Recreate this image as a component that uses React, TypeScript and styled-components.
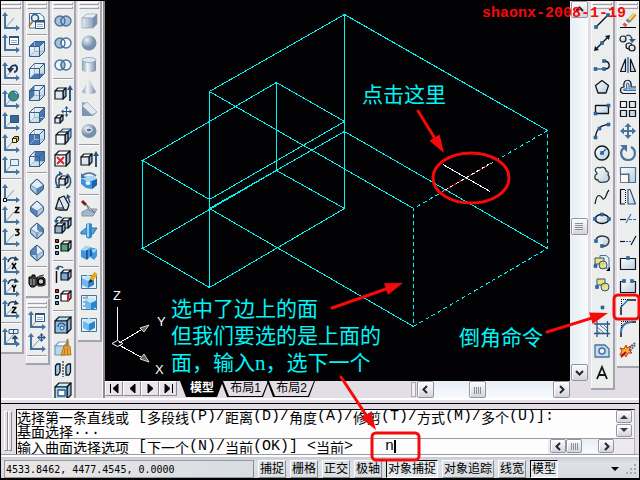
import React, { ReactNode, useState } from 'react';
import styled, { createGlobalStyle, css } from 'styled-components';

const GlobalStyle = createGlobalStyle`
  *, *::before, *::after { box-sizing: border-box; }
  body { margin: 0; background: #e3dde5; overflow: hidden; }
  button { font: inherit; color: inherit; border: 0; padding: 0; background: none; }
`;

/* ---------- layout ---------- */

const Window = styled.div`
  position: relative;
  display: flex;
  flex-direction: column;
  min-height: 100vh;
  overflow: hidden;
  background: #e3dde5;
  color: #000;
  font-family: 'Liberation Sans', 'Noto Sans CJK SC', sans-serif;
  font-size: 12px;
  &::after {
    content: '';
    position: absolute;
    inset: 0;
    border: 1px solid #000;
    border-bottom-width: 2px;
    pointer-events: none;
  }
`;

const Workspace = styled.div`
  flex: 1 0 0;
  min-height: 0;
  display: grid;
  grid-template-columns: 105px minmax(0, 1fr) 52px;
  grid-template-rows: 398px;
  overflow: hidden;
  background: linear-gradient(transparent 398px, #fff 398px, #fff 400px, transparent 400px);
`;

const Dock = styled.div<{ $side: 'left' | 'right' }>`
  display: flex;
  align-items: flex-start;
  gap: 2px;
  overflow: hidden;
  ${p => p.$side === 'left'
    ? css`border-right: 2px solid #8d8a92; box-shadow: inset -1px 0 #f6f4f8;`
    : css`padding-left: 3px;`}
`;

const DockColumn = styled.div`
  flex: none;
  width: 24px;
  display: flex;
  flex-direction: column;
  gap: 1px;
`;

const Toolbar = styled.div`
  background: #eceeed;
  border-right: 2px solid #a5a3ab;
  border-bottom: 2px solid #a5a3ab;
  box-shadow: inset 1px 1px #fbfbfd;
  padding-bottom: 4px;
`;

const Grip = styled.div`
  height: 10px;
  padding: 2px 1px 0;
  display: grid;
  grid-template-rows: 3px 3px;
  gap: 1px;
  &::before, &::after {
    content: '';
    border: 1px solid #fff;
    border-bottom-color: #a09ea8;
    border-right-color: #a09ea8;
    background: #e9e6ea;
  }
`;

const ToolButton = styled.button`
  display: block;
  width: 22px;
  height: 22px;
  svg { display: block; }
`;

const Separator = styled.hr`
  height: 6px;
  margin: 0 1px;
  border: 0;
  background: linear-gradient(transparent 2px, #9b99a3 2px, #9b99a3 3px, #fff 3px, #fff 4px, transparent 4px);
`;

const Center = styled.div`
  display: grid;
  grid-template-columns: minmax(0, 1fr) 18px;
  grid-template-rows: minmax(0, 1fr) 17px;
`;

const Canvas = styled.main`
  position: relative;
  overflow: hidden;
  background: #020104;
  svg { display: block; }
`;

const Note = styled.p<{ $x: number; $y: number }>`
  position: absolute;
  left: ${p => p.$x}px;
  top: ${p => p.$y}px;
  margin: 0;
  color: #00f6f6;
  font: 21px/27px 'Liberation Serif', 'Noto Sans CJK SC', sans-serif;
  white-space: nowrap;
`;

const VScroll = styled.div`
  display: flex;
  flex-direction: column;
  padding: 1px 0 0 1px;
  background: linear-gradient(90deg, #e6eef4, #f8fbfd);
`;

const HScroll = styled.div<{ $w?: number }>`
  display: flex;
  width: ${p => (p.$w ? `${p.$w}px` : 'auto')};
  background: linear-gradient(#e6eef4, #f8fbfd);
`;

const Splitter = styled.div`
  width: 5px;
  margin: 1px 1px 1px 0;
  border: 1px solid #a9a7b1;
  background: #f0eef2;
`;

const Space = styled.span<{ $grow: number }>`
  flex: ${p => p.$grow} 0 0;
`;

const ScrollButton = styled.button<{ $w?: number; $h?: number }>`
  flex: none;
  width: ${p => p.$w ?? 17}px;
  height: ${p => p.$h ?? 17}px;
  display: grid;
  place-items: center;
  border: 1px solid #9694a4;
  border-radius: 2px;
  background: linear-gradient(#fdfdfe, #d3d3dd);
  box-shadow: inset 1px 1px #fff;
`;

const BottomRow = styled.div`
  grid-column: 1 / -1;
  display: flex;
  align-items: stretch;
  padding-right: 18px;
  background: #e3dde5;
`;

const NavButton = styled.button`
  width: 18px;
  height: 15px;
  display: grid;
  place-items: center;
  background: #e8e4ea;
  border: 1px solid #fff;
  border-right-color: #8d8a92;
  border-bottom-color: #8d8a92;
`;

const Tabs = styled.div`
  display: flex;
  height: 16px;
  padding-left: 3px;
`;

const tabShape = 'polygon(0 0, 100% 0, calc(100% - 6px) 100%, 6px 100%)';

const Tab = styled.button<{ $active?: boolean }>`
  width: ${p => (p.$active ? 43 : 48)}px;
  height: 16px;
  margin-right: -2px;
  padding: 0 1px 1px 2px;
  background: #000;
  clip-path: ${tabShape};
  span {
    display: block;
    height: 15px;
    line-height: 15px;
    clip-path: ${tabShape};
    background: ${p => (p.$active ? '#000' : '#e3dde5')};
    color: ${p => (p.$active ? '#fff' : '#000')};
    font-weight: ${p => (p.$active ? 700 : 400)};
  }
`;

const CommandPanel = styled.section`
  height: 52px;
  padding: 5px 5px 0 4px;
  display: flex;
  gap: 3px;
  border-top: 1px solid #000;
`;

const SideGrip = styled.div`
  width: 9px;
  height: 40px;
  margin-top: 2px;
  display: grid;
  grid-template-columns: 4px 4px;
  &::before, &::after {
    content: '';
    border: 1px solid #fff;
    border-right-color: #8d8a92;
    border-bottom-color: #8d8a92;
  }
`;

const CommandBox = styled.div`
  flex: 1;
  height: 46px;
  border: 1px solid #000;
  border-right-color: #b5b3bb;
  border-bottom-color: #fff;
  background: #fdfdfd;
  font: 14px/14px 'Noto Sans CJK SC', sans-serif;
  white-space: pre;
`;

const History = styled.div`
  display: flex;
  justify-content: space-between;
  height: 29px;
  border-bottom: 1px solid #9b99a3;
`;

const HistoryLine = styled.div`
  display: flex;
  align-items: center;
  height: 14px;
`;

const HistoryScroll = styled.div`
  width: 18px;
  padding-right: 2px;
  display: flex;
  flex-direction: column;
  gap: 1px;
  background: #f2f4f8;
`;

const PromptRow = styled.div`
  display: flex;
  height: 15px;
  background: #eee9ef;
`;

const Prompt = styled.label`
  flex: 1;
  display: flex;
  align-items: center;
  background: #fdfdfd;
`;

const Latin = styled.span`
  font-family: 'Liberation Mono', monospace;
  font-size: 15px;
`;

const CommandInput = styled.input`
  width: 9px;
  height: 14px;
  margin-left: 32px;
  padding: 0;
  border: 0;
  outline: 0;
  background: transparent;
  font: 15px/14px 'Liberation Mono', monospace;
`;

const Caret = styled.i`
  width: 2px;
  height: 13px;
  background: #000;
`;

const PromptScroll = styled.div`
  width: 86px;
  padding: 0 20px 0 2px;
`;

const StatusBar = styled.footer`
  flex: none;
  height: 25px;
  padding: 4px 2px 3px 4px;
  display: flex;
  align-items: center;
  gap: 4px;
  border-top: 2px solid #fff;
  box-shadow: 0 -1px #9b99a3;
  background: linear-gradient(#c9cbd2, #dfe2e8 6px, #d4d9df);
`;

const Coordinates = styled.output`
  width: 250px;
  height: 18px;
  padding-left: 1px;
  border: 1px solid #9b99a3;
  border-right-color: #8a8a92;
  background: linear-gradient(90deg, #ebe7e4, #d7dde3);
  font: 10px/17px 'DejaVu Sans Mono', monospace;
  white-space: nowrap;
`;

const StatusButton = styled.button<{ $on?: boolean }>`
  height: 18px;
  padding: 0 1px;
  line-height: 16px;
  white-space: nowrap;
  border: 1px solid;
  border-color: ${p => (p.$on ? '#000 #fff #fff #000' : '#fff #8a8a92 #8a8a92 #fff')};
  background: ${p => (p.$on ? '#e6e9ed' : '#dcdfe4')};
`;

const StatusEnd = styled.div`
  margin-left: auto;
  display: flex;
  align-items: flex-end;
  gap: 7px;
`;

const Overlay = styled.svg`
  position: absolute;
  left: 0;
  top: 0;
  z-index: 2;
  pointer-events: none;
`;

const SharedFills = styled.svg`
  position: absolute;
  width: 0;
  height: 0;
`;

const Stamp = styled.div`
  position: absolute;
  top: 5px;
  right: 14px;
  z-index: 3;
  color: #f50a0a;
  font: bold 15px/17px 'Liberation Mono', monospace;
`;

/* ---------- icons, each on a 22 x 22 grid ---------- */

const navy = '#2a5583';
const steel = '#46729f';
const blue = '#4677b0';
const pale = '#d9e6f0';
const mid = '#8fb0cf';

const Icon = ({ children }: { children?: ReactNode }) => (
  <svg width="22" height="22" viewBox="0 0 22 22" fill="none" stroke={navy} strokeWidth="1" strokeLinejoin="round">{children}</svg>
);

const Axes = ({ children, diagonal = true }: { children?: ReactNode; diagonal?: boolean }) => (
  <Icon>
    {diagonal && <path d="M6 17L14 8" stroke="#7e9cb8" />}
    <path d="M5 5V18H17" stroke={steel} strokeWidth="2" strokeLinejoin="miter" />
    <path d="M5 2L2 6H8ZM20 18L16 15V21Z" fill={steel} stroke="none" />
    {children}
  </Icon>
);

const Turn = ({ glyph }: { glyph: string }) => (
  <Axes>
    <path d="M8 8C9 3 14 3 16 5" stroke="#1d3a5e" strokeWidth="1.500" />
    <path d="M15 2L19 6L14 7Z" fill="#1d3a5e" stroke="none" />
    <path d={glyph} stroke="#000" strokeWidth="1.500" />
  </Axes>
);

const faces: Record<string, string> = {
  top: '3.5,8.5 8.5,3.5 18.5,3.5 13.5,8.5',
  bottom: '3.5,18.5 8.5,13.5 18.5,13.5 13.5,18.5',
  left: '3.5,8.5 8.5,3.5 8.5,13.5 3.5,18.5',
  right: '13.5,8.5 18.5,3.5 18.5,13.5 13.5,18.5',
  front: '3.5,8.5 13.5,8.5 13.5,18.5 3.5,18.5',
  back: '8.5,3.5 18.5,3.5 18.5,13.5 8.5,13.5',
};

const ViewCube = ({ face }: { face: string }) => (
  <Icon>
    <path d="M3.500 8.500L8.500 3.500H18.500V13.500L13.500 18.500H3.500Z" fill="url(#glass)" stroke="none" />
    <polygon points={faces[face]} fill={blue} stroke="none" />
    <path d="M8.500 3.500V13.500H18.500M8.500 13.500L3.500 18.500" stroke="#9db9d2" />
    <path d="M3.500 8.500L8.500 3.500H18.500V13.500L13.500 18.500H3.500ZM3.500 8.500H13.500V18.500M13.500 8.500L18.500 3.500" stroke="#355f8c" />
  </Icon>
);

const isoParts = ['11,13 17.5,9 17.5,13 11,19', '4.5,9 11,13 11,19 4.5,13', '11,3 17.5,9 17.5,13 11,10', '4.5,9 11,3 11,13 4.5,13'];

const IsoCube = ({ dark }: { dark: number }) => (
  <Icon>
    <path d="M11 3L17.500 9V13L11 19L4.500 13V9Z" fill="#b0cbe2" />
    <path d="M4.500 9L11 13L17.500 9L11 3Z" fill="#e2edf6" stroke="#7c9cba" />
    <polygon points={isoParts[dark]} fill={blue} fillOpacity=".85" stroke="none" />
    <path d="M11 13V19" stroke={steel} />
    <path d="M11 3L17.500 9V13L11 19L4.500 13V9Z" stroke="#355f8c" />
  </Icon>
);

const Box = ({ x = 3, y = 6, s = 9, d = 4, fill = '#dbe8f0', top = '#fff', line = '#10151c' }: {
  x?: number; y?: number; s?: number; d?: number; fill?: string; top?: string; line?: string;
}) => (
  <g stroke={line} strokeWidth="1.200">
    <path d={`M${x} ${y + d}L${x + d} ${y}H${x + s + d}L${x + s} ${y + d}Z`} fill={top} />
    <path d={`M${x + s} ${y + d}L${x + s + d} ${y}V${y + s}L${x + s} ${y + s + d}Z`} fill={mid} />
    <path d={`M${x} ${y + d}H${x + s}V${y + s + d}H${x}Z`} fill={fill} />
  </g>
);

const Extrude = () => (
  <Icon>
    <Box x={3} y={6} s={8} d={3} />
    <path d="M18 19V7" strokeWidth="2" />
    <path d="M18 3L15 8H21Z" fill={navy} stroke="none" />
  </Icon>
);

const Circles = ({ a, b, both }: { a: string; b: string; both: string }) => (
  <Icon>
    <g strokeWidth="1.400" stroke={steel}>
      <circle cx="8" cy="11" r="5" fill={a} />
      <circle cx="14" cy="11" r="5" fill={b} />
      <path d="M11 7A5 5 0 0 1 11 15A5 5 0 0 1 11 7Z" fill={both} />
    </g>
  </Icon>
);

const Dots = ({ pts }: { pts: number[][] }) => (
  <>{pts.map(([x, y]) => <rect key={`${x},${y}`} x={x - 1.5} y={y - 1.5} width="3" height="3" fill="#1c6cc4" stroke={navy} strokeWidth=".6" />)}</>
);

const List = () => (
  <>
    <rect x="3.500" y="3.500" width="3" height="3" fill="#d22" stroke="#000" />
    <rect x="3.500" y="9.500" width="3" height="3" fill="#3c8" stroke="#000" />
    <rect x="3.500" y="15.500" width="3" height="3" fill="#48e" stroke="#000" />
  </>
);

const Card = () => (
  <>
    <rect x="9.500" y="4.500" width="9" height="8" fill="#fff" />
    <path d="M9 5H19" strokeWidth="2" />
    <path d="M11 8.500H17M11 10.500H17" stroke={mid} />
  </>
);

const BlueCube = ({ x = 5, y = 5 }: { x?: number; y?: number }) => (
  <g transform={`translate(${x} ${y})`} stroke="none">
    <path d="M0 3L6 0L12 3L6 6Z" fill="#bfe6ff" />
    <path d="M0 3L6 6V13L0 10Z" fill="#6fb9ec" />
    <path d="M12 3L6 6V13L12 10Z" fill="#2c83cc" />
  </g>
);

type Tool = [string, ReactNode] | null;

const ucsTools: Tool[] = [
  ['UCS', <Axes />],
  ['Named UCS', <Axes diagonal={false}><Card /></Axes>],
  null,
  ['Previous UCS', <Axes><path d="M10 10C11 4 18 4 17 9C17 11 15 12 14 12" stroke="#1d3a5e" strokeWidth="2" /><path d="M7 8H14L10 13Z" fill="#1d3a5e" stroke="none" /></Axes>],
  null,
  ['World UCS', <Axes><circle cx="13.500" cy="8" r="5" fill="#3c82b8" /><path d="M10 5L14 4L13 8L10 9ZM14 9L17 7V11L14 12Z" fill="#36a046" stroke="none" /><path d="M15 4L17 6" stroke="#dff" /></Axes>],
  ['Object UCS', <Axes><rect x="10.500" y="5.500" width="8" height="7" fill="#356896" /></Axes>],
  ['Face UCS', <Axes><path d="M12.500 6.500L14.500 4.500H18.500V8.500L16.500 10.500H12.500Z" fill="#c8b44c" stroke="#222" /><path d="M12.500 6.500H16.500V10.500H12.500Z" fill="#fff6a0" stroke="#222" /></Axes>],
  ['View UCS', <Axes><rect x="10.500" y="5.500" width="8" height="6" fill="#e4eff6" stroke={steel} /></Axes>],
  null,
  ['Origin', <Axes><rect x="3.500" y="16.500" width="3" height="3" fill="#fff" stroke="#000" /></Axes>],
  ['Z axis', <Axes><path d="M15 3.500H19L15 8.500H19.500" stroke="#000" strokeWidth="1.500" /></Axes>],
  ['3 point', <Axes><path d="M15 3.500H19L17 5.500C20 6 20 10 15 9" stroke="#000" strokeWidth="1.500" /></Axes>],
  null,
  ['Rotate X', <Turn glyph="M12 9L16 15M16 9L12 15" />],
  ['Rotate Y', <Turn glyph="M12 9L14 12L16 9M14 12V16" />],
  ['Rotate Z', <Turn glyph="M12 9.500H16L12 14.500H16.500" />],
  null,
  ['Apply UCS', <Axes><path d="M9 3.500H18V7.500H9ZM13.500 3.500V7.500" fill="#e4eff6" /><path d="M15 17V11M12.500 13L15 10L17.500 13" stroke="#1d3a5e" strokeWidth="1.500" /></Axes>],
];

const viewTools: Tool[] = [
  ['Named views', <Icon><path d="M3.500 3.500H14L18 7V18H3.500Z" fill="#f2f7fa" stroke={steel} /><circle cx="9" cy="8" r="3.500" fill="#e2f0fa" strokeWidth="1.500" /><path d="M7 11L3 16" stroke="#b87420" strokeWidth="2" /><rect x="9.500" y="10.500" width="9" height="8" fill="#fff" /><path d="M9 11.500H19" strokeWidth="2" /><path d="M11 14.500H17M11 16.500H17" stroke={mid} /></Icon>],
  null,
  ...['top', 'bottom', 'left', 'right', 'front', 'back'].map(f => [f, <ViewCube face={f} />] as Tool),
  null,
  ...[0, 1, 2, 3].map(n => [`Isometric ${n + 1}`, <IsoCube dark={n} />] as Tool),
  null,
  ['Camera', <Icon><path d="M3 7H6V5H9V7L12 9V14L8 17H5L3 14Z" fill="#3a3a3a" stroke="#000" /><path d="M11 7H17L19 9V15L16 16H12Z" fill="#777" stroke="#111" /><circle cx="15" cy="11.500" r="3" fill="#c4cccc" stroke="#000" strokeWidth="1.500" /><path d="M5 9V15M8 9V15" stroke="#b4b4b4" /><path d="M13 6L18 5" stroke="#333" /></Icon>],
];

const ucsTwoTools: Tool[] = [
  ['UCS dialog', <Axes><Card /></Axes>],
  ['Move UCS', <Axes><path d="M15.500 3V10M12 6.500H19" strokeWidth="1.300" /><path d="M15.500 2L13.500 4.500H17.500ZM15.500 11L13.500 8.500H17.500ZM11 6.500L13.500 4.500V8.500ZM20 6.500L17.500 4.500V8.500Z" fill={navy} stroke="none" /></Axes>],
  null,
];

const editTools: Tool[] = [
  ['Union', <Circles a="#a9c1d6" b="#a9c1d6" both="#a9c1d6" />],
  ['Subtract', <Circles a="#a9c1d6" b="#f2f5f6" both="#fff" />],
  ['Intersect', <Circles a="#f2f5f6" b="#f2f5f6" both="#a9c1d6" />],
  null,
  ['Extrude faces', <Extrude />],
  ['Move faces', <Icon><Box x={3} y={11} s={5} d={3} /><path d="M14.500 3V12M10 7.500H19" /><path d="M14.500 2L12.500 4.500H16.500ZM14.500 13L12.500 10.500H16.500ZM9 7.500L11.500 5.500V9.500ZM20 7.500L17.500 5.500V9.500Z" fill={navy} stroke="none" /></Icon>],
  ['Offset faces', <Icon><Box x={7} y={3} s={8} d={4} fill={mid} top={pale} line={navy} /><Box x={4} y={6} s={9} d={3} fill="#f2f6f8" /></Icon>],
  ['Delete faces', <Icon><Box x={3} y={3} s={11} d={4} fill="#f6f8f8" /><path d="M5 9L12 16M12 9L5 16" stroke="#d8262c" strokeWidth="2" /></Icon>],
  ['Rotate faces', <Icon><Box x={7} y={6} s={6} d={3} /><path d="M8 4C2 6 3 14 7 18M14 18C20 16 20 8 15 4" strokeWidth="1.600" /><path d="M7 1L11 4L7 6ZM3 18H8V14Z" fill={navy} stroke="none" /></Icon>],
  ['Taper faces', <Icon><path d="M3.500 17L7 6L12 4L17 13L15 18H7Z" fill={pale} stroke="#10151c" strokeWidth="1.300" /><path d="M7 6L12 17M4 16H12" stroke="#10151c" /><path d="M18 11L16 5" strokeWidth="1.500" /><path d="M15 2L19 5L14 7Z" fill={navy} stroke="none" /></Icon>],
  ['Copy faces', <Icon><Box x={9} y={4} s={7} d={3} fill="#b8d8ee" /><Box x={3} y={9} s={7} d={3} fill={mid} /><path d="M4 7C4 3 7 2 10 4" strokeWidth="1.500" /><path d="M2 6H7L4 10Z" fill={navy} stroke="none" /></Icon>],
  ['Colour faces', <Icon><List /><Box x={9} y={5} s={7} d={3} fill="#56a86e" /></Icon>],
  null,
  ['Copy edges', <Icon><Box x={9} y={6} s={7} d={3} fill="#7aaad6" /><path d="M4.500 7V19" stroke="#10151c" strokeWidth="1.500" /><path d="M5 4C7 2 10 2 11 4" strokeWidth="1.500" /><path d="M3 5L7 1V6Z" fill={navy} stroke="none" /></Icon>],
  ['Colour edges', <Icon><List /><Box x={9} y={5} s={7} d={3} fill="#fff" /><path d="M16 8V15" stroke="#e02020" strokeWidth="2" /></Icon>],
  null,
  ['Imprint', <Icon><Box x={3} y={3} s={12} d={4} fill="#8fc0e4" top="#b8dcf4" /><path d="M6 13C6 8 12 8 13 12" stroke={navy} strokeWidth="1.300" /><circle cx="10" cy="14" r="2" fill="#cfe6f6" /></Icon>],
  ['Clean', <Icon><Box x={3} y={6} s={9} d={4} fill="#bcd4e8" line="#7e98b4" /><path d="M15.500 3V10" stroke="#b07820" strokeWidth="2" /><path d="M12 10H18L19 19H9Z" fill="#f0a830" stroke="#b07820" /><path d="M13 12L12 19M15.500 12V19" stroke="#b8701c" /></Icon>],
  ['Separate', <Icon><path d="M3.500 8L5 6H8V14L6 17H3.500Z" fill="#9ecbe8" stroke="#10151c" strokeWidth="1.300" /><path d="M14 8L16 6H18.500V14L17 17H14Z" fill="#9ecbe8" stroke="#10151c" strokeWidth="1.300" /><path d="M11 3V19" stroke="#000" strokeDasharray="2 1" /></Icon>],
  ['Shell', <Icon><Box x={3} y={3} s={12} d={4} fill="#a8daf4" top="#c8ecfc" /><rect x="6" y="10" width="7" height="6" fill="#fff" stroke={navy} strokeWidth="1.300" /></Icon>],
];

const solidTools: Tool[] = [
  ['Box', <Icon><g stroke="#8294a8" strokeWidth=".6"><path d="M4 8L9 4H19L15 8Z" fill="#e8eff5" /><path d="M15 8L19 4V14L15 18Z" fill="#7890ac" /><path d="M4 8H15V18H4Z" fill="url(#steel)" /></g></Icon>],
  ['Sphere', <Icon><circle cx="11" cy="11" r="7.500" fill="url(#ball)" stroke="none" /></Icon>],
  ['Cylinder', <Icon><path d="M4 6V16C4 19 18 19 18 16V6Z" fill="url(#tube)" stroke="none" /><ellipse cx="11" cy="6" rx="7" ry="2.500" fill="#dde7f0" stroke="#8ba0b6" strokeWidth=".8" /></Icon>],
  ['Cone', <Icon><path d="M11 3L18 16C16 19 6 19 4 16Z" fill="url(#tube)" stroke="none" /></Icon>],
  ['Wedge', <Icon><path d="M4 4L9 5L19 14L15 18H4Z" fill="#8fa4bc" stroke="none" /><path d="M9 4L19 14L14 17L4 8Z" fill="#dfe9f2" stroke="#93a5ba" strokeWidth=".7" /><path d="M4 8L14 18H4Z" fill="#7f94ae" stroke="none" /></Icon>],
  ['Torus', <Icon><ellipse cx="11" cy="11" rx="7.500" ry="7" fill="url(#ball)" stroke="none" /><ellipse cx="11" cy="10" rx="3" ry="2" fill="#5e7894" stroke="#f4f8fa" /></Icon>],
  null,
  ['Extrude', <Extrude />],
  ['Revolve', <Icon><path d="M3 9L9 6H15L19 9V15L14 19L8 18L3 14Z" fill="#3b94e2" stroke="none" /><path d="M4 8L9 6H16L19 9L14 11H8Z" fill="#a8d4f4" stroke="none" /><path d="M14 11L19 9V15L14 19Z" fill="#1c62ae" stroke="none" /><ellipse cx="10" cy="13" rx="2.500" ry="2" fill="#eef6fc" stroke="none" /><path d="M4 6C8 2 14 2 18 6" strokeWidth="1.600" stroke={steel} /><path d="M3 3V8H8Z" fill={steel} stroke="none" /></Icon>],
  null,
  ['Slice', <Icon><path d="M4 14L10 11H19L15 18H4Z" fill="#a4b8cc" stroke="#8296ac" /><path d="M4 3L8 7" stroke="#7a2418" strokeWidth="3" /><path d="M8 6L17 15L11 12Z" fill="#c8d2da" stroke="#6a7886" /></Icon>],
  ['Section', <Icon><path d="M3 12L8 8H19L15 14H3Z" fill="#4da4e4" stroke="#2c6eaa" /><path d="M8 4C10 3 13 3 14 4V17C12 19 10 19 8 17Z" fill="#3686cc" stroke="none" /><path d="M10 4V17" stroke="#9cd0f4" strokeWidth="2" /></Icon>],
  ['Interfere', <Icon><path d="M3 8L8 4L19 7V14L16 18L12 15L9 18L3 15Z" fill="#3e96dc" stroke="none" /><path d="M3 8L8 4L13 5L8 9ZM12 8L19 7L16 11Z" fill="#a6d8f6" stroke="none" /><path d="M9 8V17M13 8V14" stroke="#1d5e9c" strokeWidth="2" /></Icon>],
  null,
  ['Drawing', <Icon><rect x="3.500" y="5.500" width="15" height="13" fill="#e8f0f6" stroke={steel} /><BlueCube x={4} y={5} /><path d="M18 3L13 10" stroke="#e8a81c" strokeWidth="4" /><path d="M12 9L11 13L15 11Z" fill="#222" stroke="none" /></Icon>],
  ['View', <Icon><rect x="3.500" y="3.500" width="15" height="14" fill="#e8f0f6" stroke={steel} /><path d="M5 6H8M5 10H8M5 14H8M9 3V17" stroke={steel} /><BlueCube x={7} y={5} /></Icon>],
  ['Profile', <Icon><rect x="3.500" y="4.500" width="15" height="13" fill="#e8f0f6" stroke={steel} /><BlueCube x={5} y={4} /></Icon>],
];

const ink = '#11161c';

const drawTools: Tool[] = [
  ['Line', <Icon><path d="M5 17L17 5" stroke={ink} strokeWidth="1.400" /><Dots pts={[[5, 17], [17, 5]]} /></Icon>],
  ['Construction line', <Icon><path d="M5 17L17 5" stroke={ink} strokeWidth="1.400" /><path d="M19 3L18 8L14 4ZM3 19L4 14L8 18Z" fill={ink} stroke="none" /><Dots pts={[[11, 11]]} /></Icon>],
  ['Polyline', <Icon><path d="M13 15H15C20 14 19 7 13 7" stroke={ink} strokeWidth="1.400" /><path d="M4 15H13" stroke="#2a66a8" strokeWidth="1.400" /><Dots pts={[[4.5, 15], [13, 15], [13, 7]]} /></Icon>],
  ['Polygon', <Icon><path d="M11 4.500L17.500 9.500L15 17H7L4.500 9.500Z" fill="url(#glass)" stroke={ink} strokeWidth="1.300" /></Icon>],
  ['Rectangle', <Icon><rect x="4.500" y="7.500" width="13" height="8" fill="url(#glass)" stroke={ink} strokeWidth="1.300" /><Dots pts={[[4.5, 15.5], [17.5, 7.5]]} /></Icon>],
  ['Arc', <Icon><path d="M4.500 18C5 9 9 5 18 4.500" stroke={ink} strokeWidth="1.300" /><Dots pts={[[4.5, 17.5], [8.5, 8.5], [17.5, 4.5]]} /></Icon>],
  ['Circle', <Icon><circle cx="11" cy="11" r="7" fill="url(#glass)" stroke={ink} strokeWidth="1.400" /><path d="M11 11L15 7" stroke="#1c6cc4" strokeWidth="1.500" /><Dots pts={[[11, 11]]} /></Icon>],
  ['Revision cloud', <Icon><path d="M6 9C2 6 6 2 9 4C12 2 15 4 15 7C17 7 18 9 17 11C20 14 17 19 13 18C10 19 7 18 7 16C3 16 3 11 6 10Z" fill="url(#glass)" stroke="#343b45" strokeWidth="1.300" /></Icon>],
  ['Spline', <Icon><path d="M4 18C6 5 10 10 12 13C15 14 15 7 18 4" stroke={ink} strokeWidth="1.200" /></Icon>],
  ['Ellipse', <Icon><ellipse cx="11" cy="11" rx="7" ry="4.500" fill="url(#glass)" stroke={ink} strokeWidth="1.400" /><Dots pts={[[4, 11], [18, 11], [11, 6.5]]} /></Icon>],
  ['Ellipse arc', <Icon><path d="M5 9C9 4 18 6 18 11C18 15 14 17 11 16L12 11Z" fill="url(#glass)" stroke="none" /><path d="M5 9C9 4 18 6 18 11C18 15 14 17 11 16" stroke="#343b45" strokeWidth="1.400" /><Dots pts={[[5, 11], [11, 16]]} /></Icon>],
  ['Insert block', <Icon><path d="M9 3.500H15L18 6V16H9Z" fill="#e8eff5" stroke={steel} /><path d="M4 6H13V12H4Z" fill="#f0e36c" /><circle cx="12" cy="13" r="4" fill="#e8dc78" fillOpacity=".8" /><Dots pts={[[4.5, 14]]} /><path d="M19 15V19H15Z" fill="#000" stroke="none" /></Icon>],
  ['Make block', <Icon><path d="M6 5H14V11H6Z" fill="#f0e36c" /><circle cx="14" cy="13" r="4" fill="#e8dc78" fillOpacity=".8" /><Dots pts={[[6, 13]]} /></Icon>],
  ['Point', <Icon><Dots pts={[[11.5, 11.5]]} /></Icon>],
  ['Hatch', <Icon><rect x="6" y="6" width="11" height="10" fill="#edf3f7" stroke="none" /><path d="M6 3V19M16.500 3V19M3 6H19M3 15.500H19" strokeWidth="1.300" /><path d="M6 13L9 15M6 9L13 15M8 6L16 13M12 6L16 10" stroke={steel} /></Icon>],
  ['Region', <Icon><path d="M4 5H14L18 9V17H4Z" fill="#c6dcea" stroke={steel} strokeWidth="1.300" /><circle cx="11" cy="11" r="3" fill="#edf3f7" stroke={steel} strokeWidth="1.500" /></Icon>],
  ['Text', <Icon><path d="M6 17L11 5L16 17M7.500 13H14.500" stroke={ink} strokeWidth="1.800" strokeLinejoin="miter" /></Icon>],
];

const modifyTools: Tool[] = [
  ['Erase', <Icon><path d="M3 17.500H19" stroke="#000" /><path d="M18 4L12 11" stroke="#c79524" strokeWidth="4" /><path d="M18 3L12 10" stroke="#f8e37c" strokeWidth="1.500" /><path d="M12 10L10 12" stroke="#5d86bc" strokeWidth="4" /><path d="M10 12L9 13.500" stroke="#fff" strokeWidth="4" /><path d="M9 13.500L7 16" stroke="#e0584c" strokeWidth="4" /></Icon>],
  ['Copy', <Icon><g fill="url(#glass)" stroke={ink} strokeWidth="1.200"><circle cx="6" cy="7" r="3" /><circle cx="12" cy="14" r="3" /><circle cx="15" cy="16" r="3" /></g><path d="M9 4C12 2 15 4 15 8" strokeWidth="1.500" /><path d="M12 7H19L15 11Z" fill={navy} stroke="none" /></Icon>],
  ['Mirror', <Icon><path d="M8.500 5V17.500H3.500ZM13.500 5V17.500H18.500Z" fill="url(#glass)" stroke={ink} strokeWidth="1.200" /><path d="M11 3V19" stroke="#2d76bd" strokeWidth="1.500" /></Icon>],
  ['Offset', <Icon><path d="M19 17.500H6C2 16 3 11 7 11C5 2 16 2 14 11H19" stroke={ink} strokeWidth="1.200" /><path d="M19 14.500H7C6 13 8 13 10 13C8 5 13 5 12 13H19" stroke="#2d76bd" strokeWidth="1.200" /></Icon>],
  ['Array', <Icon><path d="M3.500 3.500H9.500V9.500H3.500ZM12.500 3.500H18.500V9.500H12.500ZM3.500 12.500H9.500V18.500H3.500ZM12.500 12.500H18.500V18.500H12.500Z" fill="url(#glass)" stroke={ink} strokeWidth="1.200" strokeLinejoin="miter" /></Icon>],
  ['Move', <Icon><path d="M11 5V17M5 11H17" stroke={steel} strokeWidth="2" /><path d="M11 3L7.500 7H14.500ZM11 19L7.500 15H14.500ZM3 11L7 7.500V14.500ZM19 11L15 7.500V14.500Z" fill={steel} stroke="none" /></Icon>],
  ['Rotate', <Icon><path d="M7 6C2 9 4 18 11 18C19 18 20 8 14 5" stroke={steel} strokeWidth="2.200" /><path d="M3 3H10V10Z" fill={steel} stroke="none" /></Icon>],
  ['Scale', <Icon><path d="M3.500 3.500H18.500V18.500H12V10H3.500Z" fill="url(#glass)" stroke={steel} strokeWidth="1.200" /><path d="M3.500 10.500H11.500V18.500H3.500Z" fill="#f6f8f9" stroke="#000" strokeDasharray="1 1" /></Icon>],
  ['Stretch', <Icon><path d="M8 3.500H3.500V18H8" stroke={ink} strokeWidth="1.200" /><path d="M11 3.500H13L18.500 18H11Z" fill="url(#glass)" strokeWidth="1.200" /><path d="M8.500 4V18" stroke="#000" strokeDasharray="1 1" /></Icon>],
  ['Trim', <Icon><path d="M3 11.500H9" stroke={ink} strokeWidth="1.200" /><path d="M12 11.500H20" stroke="#1c6cc4" strokeDasharray="3 1" strokeWidth="1.200" /><path d="M9 15L14 6" stroke={steel} strokeWidth="1.200" /></Icon>],
  ['Extend', <Icon><path d="M3 11.500H8" stroke={ink} strokeWidth="1.200" /><path d="M9 11.500H15" stroke="#1c6cc4" strokeDasharray="2 1" strokeWidth="1.200" /><path d="M14 15L19 6" stroke={ink} strokeWidth="1.200" /></Icon>],
  ['Break at point', <Icon><rect x="3.500" y="6.500" width="15" height="11" fill="url(#glass)" stroke={ink} strokeWidth="1.200" /><Dots pts={[[11, 6]]} /></Icon>],
  ['Break', <Icon><path d="M6 7H3.500V18.500H18.500V7H15L11 11Z" fill="url(#glass)" stroke="none" /><path d="M6 7.500H3.500V18.500H18.500V7.500H16" stroke={ink} strokeWidth="1.200" /><Dots pts={[[7, 7], [15, 7]]} /></Icon>],
  ['Chamfer', <Icon><path d="M4 19V11M11 4H19" stroke={ink} strokeWidth="1.500" /><path d="M4 11L11 4" stroke="#1c6cc4" strokeWidth="1.500" /><path d="M4.500 3V11M4 3.500H12" stroke="#000" strokeDasharray="1 1" /></Icon>],
  ['Fillet', <Icon><path d="M4 19V14M14 4H19" stroke={ink} strokeWidth="1.500" /><path d="M4 15C4 8 8 4 15 4" stroke="#3479be" strokeWidth="2" /><path d="M4.500 3V11M4 3.500H12" stroke="#000" strokeDasharray="1 1" /></Icon>],
  ['Explode', <Icon><path d="M12 8L18 3M13 11L18 5" stroke="#59687a" strokeWidth="2" strokeDasharray="2 1" /><path d="M9 5L10 8L14 6L12 10L15 13L11 13L9 17L7 14L3 15L5 11L3 8L7 9Z" fill="#f3b22d" stroke="#cc2b1c" /><path d="M4 17L9 12" stroke="#a01616" strokeWidth="2" /></Icon>],
];

/* ---------- parts ---------- */

const Tools = ({ tools }: { tools: Tool[] }) => (
  <Toolbar role="toolbar">
    <Grip />
    {tools.map((t, i) => (t ? <ToolButton key={i} aria-label={t[0]}>{t[1]}</ToolButton> : <Separator key={i} />))}
  </Toolbar>
);

const chevrons = { up: 'M1 6L4.500 2.500L8 6', down: 'M1 3L4.500 6.500L8 3', left: 'M6 1L2.500 4.500L6 8', right: 'M3 1L6.500 4.500L3 8' };

const Chevron = ({ to }: { to: keyof typeof chevrons }) => (
  <svg width="9" height="9" viewBox="0 0 9 9" fill="none" stroke="#25252d" strokeWidth="2"><path d={chevrons[to]} /></svg>
);

const SmallArrow = ({ down }: { down?: boolean }) => (
  <svg width="8" height="5" viewBox="0 0 8 5" fill="#3a3a44"><path d={down ? 'M0 0H8L4 4Z' : 'M0 5H8L4 1Z'} /></svg>
);

const Lines = ({ vertical }: { vertical?: boolean }) => (
  <svg width="9" height="8" viewBox="0 0 9 8" stroke="#8c8c9a">
    <path d={vertical ? 'M1.500 1V8M3.500 1V8M5.500 1V8M7.500 1V8' : 'M0 .500H8M0 2.500H8M0 4.500H8M0 6.500H8'} />
  </svg>
);

const navShapes = ['M1.500 1V10M9 1V10L4 5.500Z', 'M8 1V10L3 5.500Z', 'M3 1V10L8 5.500Z', 'M9.500 1V10M2 1V10L7 5.500Z'];

const solidEdges = [
  'M344 14L209 91L413 208M344 14L547 130M344 14V208M209 91V287',
  'M344 131L547 248M344 131L209 208L413 326',
  'M276 82L142 160L209 199L344 121ZM276 170L142 248L209 287L344 208ZM276 82V170M142 160V248',
];

const Drawing = () => (
  <svg width="465" height="381" viewBox="105 0 465 381" fill="none">
    <g stroke="#00f4f4" transform="translate(.5 .5)" shapeRendering="crispEdges">
      {solidEdges.map(d => <path key={d} d={d} />)}
      <path d="M547 130L413 208V326L547 248Z" strokeDasharray="4 3" />
    </g>
    <g stroke="#fff" shapeRendering="crispEdges">
      <path d="M443 164.500L490 191.500" />
      <path d="M443 191.500L490 163.500" />
      <path d="M443 191.500L490 163.500" stroke="#f00" strokeDasharray="3 3" />
      <path d="M117.500 307V340M119 343L146 327M119 345L148 361" />
    </g>
    <g stroke="#fff">
      <path d="M112 343.500L117.500 340.500L123 343.500L117.500 346.500Z" />
      <path d="M140 328L149 325L144 332ZM140 359L149 362L144 354Z" fill="#665" strokeWidth=".8" />
    </g>
    <g fill="#fff" fontFamily="Liberation Sans, sans-serif" fontSize="13">
      <text x="113" y="300">Z</text>
      <text x="157" y="326">Y</text>
      <text x="155" y="374">X</text>
    </g>
  </svg>
);

const Arrow = ({ x1, y1, x2, y2 }: { x1: number; y1: number; x2: number; y2: number }) => {
  const len = Math.hypot(x2 - x1, y2 - y1);
  const ux = (x2 - x1) / len;
  const uy = (y2 - y1) / len;
  const bx = x2 - ux * 18;
  const by = y2 - uy * 18;
  return (
    <>
      <path d={`M${x1} ${y1}L${bx} ${by}`} />
      <path d={`M${x2} ${y2}L${bx - uy * 6} ${by + ux * 6}L${bx + uy * 6} ${by - ux * 6}Z`} fill="#f50a0a" stroke="none" />
    </>
  );
};

const Markup = () => (
  <Overlay width="640" height="480" viewBox="0 0 640 480" fill="none" stroke="#f50a0a" strokeWidth="3" strokeLinecap="round">
    <ellipse cx="471" cy="178" rx="38" ry="25" />
    <Arrow x1={418} y1={111} x2={444} y2={153} />
    <Arrow x1={332} y1={308} x2={403} y2={283} />
    <Arrow x1={341} y1={377} x2={376} y2={430} />
    <Arrow x1={547} y1={332} x2={608} y2={313} />
    <rect x="614" y="295" width="25" height="24" rx="4" />
    <rect x="372" y="433" width="47" height="27" rx="4" />
  </Overlay>
);

const Mixed = ({ text }: { text: string }) => (
  <>{text.split(/([\x20-\x7e]+)/).filter(Boolean).map((part, i) => (/^[\x20-\x7e]/.test(part) ? <Latin key={i}>{part}</Latin> : <span key={i}>{part}</span>))}</>
);

const modes: [string, boolean][] = [
  ['捕捉', false], ['栅格', false], ['正交', false], ['极轴', false],
  ['对象捕捉', true], ['对象追踪', false], ['线宽', false], ['模型', true],
];

export default function App() {
  const [command, setCommand] = useState('n');
  return (
    <Window>
      <GlobalStyle />
      <SharedFills>
        <defs>
          <linearGradient id="steel"><stop stopColor="#e4ecf3" /><stop offset="1" stopColor="#91a7be" /></linearGradient>
          <linearGradient id="tube"><stop stopColor="#889eb6" /><stop offset=".4" stopColor="#f0f5f9" /><stop offset="1" stopColor="#768ca6" /></linearGradient>
          <linearGradient id="glass" x2="1" y2="1"><stop stopColor="#fff" /><stop offset="1" stopColor="#b7cbdc" /></linearGradient>
          <radialGradient id="ball" cx=".35" cy=".3"><stop stopColor="#e8f0f6" /><stop offset="1" stopColor="#768fab" /></radialGradient>
        </defs>
      </SharedFills>

      <Workspace>
        <Dock $side="left">
          <DockColumn><Tools tools={ucsTools} /></DockColumn>
          <DockColumn><Tools tools={viewTools} /><Tools tools={ucsTwoTools} /></DockColumn>
          <DockColumn><Tools tools={editTools} /></DockColumn>
          <DockColumn><Tools tools={solidTools} /></DockColumn>
        </Dock>

        <Center>
          <Canvas>
            <Drawing />
            <Note $x={257} $y={82}>点击这里</Note>
            <Note $x={66} $y={296}>选中了边上的面<br />但我们要选的是上面的<br />面，输入n，选下一个</Note>
            <Note $x={354} $y={325}>倒角命令</Note>
          </Canvas>
          <VScroll>
            <ScrollButton aria-label="up"><Chevron to="up" /></ScrollButton>
            <Space $grow={201} />
            <ScrollButton aria-label="thumb"><Lines /></ScrollButton>
            <Space $grow={129} />
            <ScrollButton aria-label="down"><Chevron to="down" /></ScrollButton>
          </VScroll>
          <BottomRow>
            {navShapes.map(d => (
              <NavButton key={d} aria-label="sheet">
                <svg width="11" height="11" viewBox="0 0 11 11" stroke="#000"><path d={d} /></svg>
              </NavButton>
            ))}
            <Tabs>
              <Tab $active><span>模型</span></Tab>
              <Tab><span>布局1</span></Tab>
              <Tab><span>布局2</span></Tab>
            </Tabs>
            <Space $grow={1} />
            <Splitter />
            <HScroll $w={153}>
              <ScrollButton aria-label="left"><Chevron to="left" /></ScrollButton>
              <Space $grow={35} />
              <ScrollButton aria-label="thumb"><Lines vertical /></ScrollButton>
              <Space $grow={67} />
              <ScrollButton aria-label="right"><Chevron to="right" /></ScrollButton>
            </HScroll>
          </BottomRow>
        </Center>

        <Dock $side="right">
          <DockColumn><Tools tools={drawTools} /></DockColumn>
          <DockColumn><Tools tools={modifyTools} /></DockColumn>
        </Dock>
      </Workspace>

      <CommandPanel>
        <SideGrip />
        <CommandBox>
          <History>
            <div>
              <HistoryLine><Mixed text="选择第一条直线或 [多段线(P)/距离(D)/角度(A)/修剪(T)/方式(M)/多个(U)]:" /></HistoryLine>
              <HistoryLine><Mixed text="基面选择..." /></HistoryLine>
            </div>
            <HistoryScroll>
              <ScrollButton $w={16} $h={13} aria-label="up"><SmallArrow /></ScrollButton>
              <ScrollButton $w={16} $h={13} aria-label="down"><SmallArrow down /></ScrollButton>
            </HistoryScroll>
          </History>
          <PromptRow>
            <Prompt>
              <Mixed text="输入曲面选择选项 [下一个(N)/当前(OK)] <当前>" />
              <CommandInput value={command} onChange={e => setCommand(e.target.value)} />
              <Caret />
            </Prompt>
            <PromptScroll>
              <HScroll>
                <ScrollButton $h={14} $w={16} aria-label="left"><Chevron to="left" /></ScrollButton>
                <ScrollButton $h={14} $w={16} aria-label="thumb"><Lines vertical /></ScrollButton>
                <Space $grow={1} />
                <ScrollButton $h={14} $w={16} aria-label="right"><Chevron to="right" /></ScrollButton>
              </HScroll>
            </PromptScroll>
          </PromptRow>
        </CommandBox>
      </CommandPanel>

      <StatusBar>
        <Coordinates>4533.8462, 4477.4545, 0.0000</Coordinates>
        {modes.map(([name, on]) => <StatusButton key={name} $on={on} aria-pressed={on}>{name}</StatusButton>)}
        <StatusEnd>
          <svg width="8" height="9" viewBox="0 0 8 9"><path d="M0 1H8L4 5Z" /></svg>
          <svg width="12" height="12" viewBox="0 0 12 12" fill="#a9a9b4">
            <path d="M8 1h2v2h-2zM8 5h2v2h-2zM4 5h2v2h-2zM8 9h2v2h-2zM4 9h2v2h-2zM0 9h2v2h-2z" />
          </svg>
        </StatusEnd>
      </StatusBar>

      <Stamp>shaonx-2008-1-19</Stamp>
      <Markup />
    </Window>
  );
}
